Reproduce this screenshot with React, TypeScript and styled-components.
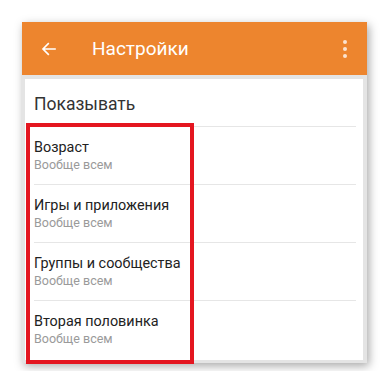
import React from 'react'
import styled, { createGlobalStyle } from 'styled-components'

const GlobalStyle = createGlobalStyle`
  html, body {
    margin: 0;
    padding: 0;
    background: #ffffff;
  }
  body {
    font-family: Roboto, 'Noto Sans', Arial, sans-serif;
  }
`

const Page = styled.div`
  width: 390px;
  height: 371px;
  padding: 22px 0 0 22px;
  box-sizing: border-box;
  overflow: hidden;
`

const Phone = styled.div`
  width: 345px;
  box-shadow: 2px 3px 9px rgba(0, 0, 0, 0.35);
`

const Toolbar = styled.div`
  display: flex;
  align-items: center;
  height: 53px;
  background: #ed852e;
  color: #fff;
  padding: 0 0 0 17px;
`

const IconButton = styled.div`
  display: flex;
  align-items: center;
  justify-content: center;
  width: 20px;
  height: 20px;
`

const Title = styled.div`
  margin-left: 33px;
  font-size: 19px;
  flex: 1;
`

const MenuButton = styled.div`
  display: flex;
  flex-direction: column;
  align-items: center;
  gap: 3px;
  width: 12px;
  margin-right: 16px;

  & span {
    width: 4px;
    height: 4px;
    border-radius: 50%;
    background: #fbe3cf;
  }
`

const Body = styled.div`
  background: #e4e4e4;
  padding: 4px 4px 3px 3px;
`

const Card = styled.div`
  position: relative;
  background: #fff;
  height: 281px;
`

const SectionTitle = styled.div`
  height: 48px;
  display: flex;
  align-items: center;
  padding-top: 2px;
  box-sizing: border-box;
  margin: 0 7px 0 9px;
  font-size: 17.5px;
  color: #333;
  border-bottom: 1px solid #e6e6e6;
`

const Row = styled.div<{ $last?: boolean }>`
  height: 58px;
  margin: 0 7px 0 9px;
  padding-top: 11px;
  box-sizing: border-box;
  border-bottom: ${({ $last }) => ($last ? 'none' : '1px solid #e6e6e6')};
`

const RowTitle = styled.div`
  font-size: 14.4px;
  line-height: 19px;
  color: #222;
`

const RowSub = styled.div`
  font-size: 12.5px;
  line-height: 16px;
  color: #9a9a9a;
`

const Highlight = styled.div`
  position: absolute;
  left: 1px;
  top: 44px;
  width: 160px;
  height: 233px;
  border: 4px solid #e41620;
`

const rows = [
  'Возраст',
  'Игры и приложения',
  'Группы и сообщества',
  'Вторая половинка',
]

const App = () => {
  return (
    <>
      <GlobalStyle />
      <Page>
        <Phone>
          <Toolbar>
            <IconButton>
              <svg width="18" height="18" viewBox="0 0 24 24" fill="none">
                <path
                  d="M20 12H5M11 5l-7 7 7 7"
                  stroke="#fff"
                  strokeWidth="2.2"
                  strokeLinecap="square"
                />
              </svg>
            </IconButton>
            <Title>Настройки</Title>
            <MenuButton>
              <span />
              <span />
              <span />
            </MenuButton>
          </Toolbar>
          <Body>
            <Card>
              <SectionTitle>Показывать</SectionTitle>
              {rows.map((title, index) => (
                <Row key={title} $last={index === rows.length - 1}>
                  <RowTitle>{title}</RowTitle>
                  <RowSub>Вообще всем</RowSub>
                </Row>
              ))}
              <Highlight />
            </Card>
          </Body>
        </Phone>
      </Page>
    </>
  )
}

export default App
